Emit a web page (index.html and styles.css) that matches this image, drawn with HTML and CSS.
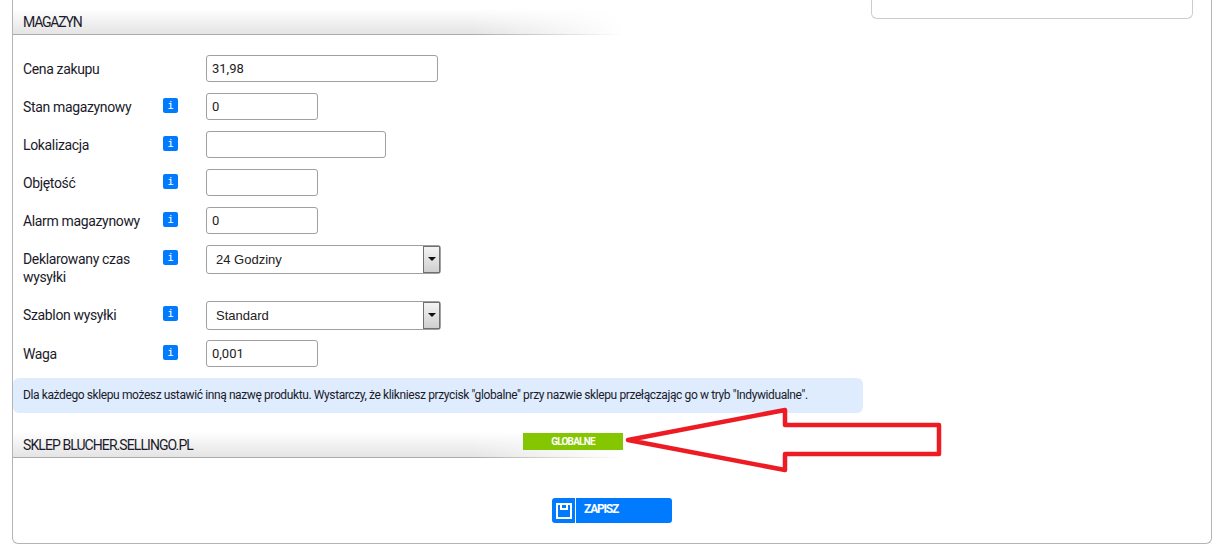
FILE: index.html
```html
<!DOCTYPE html>
<html>

<head>
  <title>Magazyn</title>
  <meta charset="UTF-8">
  <link rel="stylesheet" href="styles.css">
</head>

<body>
  <div class="panel">
    <div class="topArea">
      <div class="leftCol">
        <div class="sectionHead firstHead">MAGAZYN</div>

        <div class="formRow">
          <label class="rowLabel">Cena zakupu</label>
          <span class="infoSlot"></span>
          <input class="field wide" type="text" value="31,98">
        </div>
        <div class="formRow">
          <label class="rowLabel">Stan magazynowy</label>
          <span class="infoSlot"><span class="infoIcon">i</span></span>
          <input class="field small" type="text" value="0">
        </div>
        <div class="formRow">
          <label class="rowLabel">Lokalizacja</label>
          <span class="infoSlot"><span class="infoIcon">i</span></span>
          <input class="field medium" type="text">
        </div>
        <div class="formRow">
          <label class="rowLabel">Objętość</label>
          <span class="infoSlot"><span class="infoIcon">i</span></span>
          <input class="field small" type="text">
        </div>
        <div class="formRow">
          <label class="rowLabel">Alarm magazynowy</label>
          <span class="infoSlot"><span class="infoIcon">i</span></span>
          <input class="field small" type="text" value="0">
        </div>
        <div class="formRow selectRow twoLines">
          <label class="rowLabel">Deklarowany czas wysyłki</label>
          <span class="infoSlot"><span class="infoIcon">i</span></span>
          <div class="selectWrap">
            <select class="selectField">
              <option>24 Godziny</option>
            </select>
            <span class="selectArrow"></span>
          </div>
        </div>
        <div class="formRow selectRow">
          <label class="rowLabel">Szablon wysyłki</label>
          <span class="infoSlot"><span class="infoIcon">i</span></span>
          <div class="selectWrap">
            <select class="selectField">
              <option>Standard</option>
            </select>
            <span class="selectArrow"></span>
          </div>
        </div>
        <div class="formRow">
          <label class="rowLabel">Waga</label>
          <span class="infoSlot"><span class="infoIcon">i</span></span>
          <input class="field small" type="text" value="0,001">
        </div>

        <div class="notice">Dla każdego sklepu możesz ustawić inną nazwę produktu. Wystarczy, że klikniesz przycisk "globalne" przy nazwie sklepu przełączając go w tryb "Indywidualne".</div>

        <div class="sectionHead shopHead">
          <span class="shopName">SKLEP BLUCHER.SELLINGO.PL</span>
          <span class="globalBadge">GLOBALNE</span>
        </div>
      </div>
      <div class="sideCard"></div>
    </div>

    <div class="saveBar">
      <button class="saveBtn">
        <span class="saveIcon">
          <svg width="16" height="16" viewBox="0 0 16 16">
            <path d="M1 1H15V15H1Z M5 1V6H11V1" fill="none" stroke="#fff" stroke-width="2"/>
          </svg>
        </span>
        <span class="saveText">ZAPISZ</span>
      </button>
    </div>

    <!-- red arrow drawn on top of the screenshot -->
    <svg class="redArrow" width="325" height="75" viewBox="0 0 325 75">
      <path d="M9 37L166 7V22H320V51H166V67Z" fill="none" stroke="#ed1c24" stroke-width="4.5" stroke-linejoin="round"/>
    </svg>
  </div>
</body>

</html>
```

FILE: styles.css
```css
body {
  margin: 0;
  background-color: #ffffff;
  font-family: "Roboto", "Liberation Sans", sans-serif;
  color: #1a1a2a;
}
.panel {
  position: relative;
  box-sizing: border-box;
  width: 1200px;
  height: 544px;
  margin-left: 12px;
  border: 1px solid #b4b4b4;
  border-top: none;
  border-radius: 0 0 6px 6px;
}
.topArea {
  display: flex;
  height: 470px;
}
.leftCol {
  width: 850px;
}
.sideCard {
  box-sizing: border-box;
  width: 322px;
  height: 19px;
  margin-left: 8px;
  border: 1px solid #cccccc;
  border-top: none;
  border-radius: 0 0 6px 6px;
}
.sectionHead {
  box-sizing: border-box;
  width: 610px;
  padding-left: 10px;
  border-bottom: 1px solid;
  border-image: linear-gradient(to right, #aaaaaa 75%, transparent) 1;
  background: linear-gradient(to right, transparent 75%, #ffffff 100%), linear-gradient(#ffffff, #e4e4e4);
  font-size: 14px;
}
.firstHead {
  height: 26px;
  margin: 9px 0 20px;
  padding-top: 5px;
  letter-spacing: -1.2px;
}
.formRow {
  display: flex;
  align-items: flex-start;
  margin-bottom: 11px;
}
.rowLabel {
  box-sizing: border-box;
  width: 150px;
  padding: 5px 0 0 10px;
  font-size: 14px;
  line-height: 18px;
  letter-spacing: -0.35px;
}
.infoSlot {
  width: 43px;
  padding-top: 5px;
}
.infoIcon {
  display: block;
  width: 15px;
  height: 15px;
  background-color: #007bff;
  border-radius: 2px;
  color: #ffffff;
  font-family: "DejaVu Sans Mono", monospace;
  font-size: 11px;
  line-height: 15px;
  text-align: center;
}
.field {
  box-sizing: border-box;
  height: 27px;
  padding: 0 5px;
  border: 1px solid #a0a0a0;
  border-radius: 3px;
  font-family: "Roboto", sans-serif;
  font-size: 13px;
  color: #222222;
}
.wide {
  width: 232px;
}
.medium {
  width: 180px;
}
.small {
  width: 112px;
}
.selectRow {
  margin-bottom: 10px;
}
.twoLines {
  height: 46px;
  margin-bottom: 10px;
}
.selectWrap {
  position: relative;
  width: 235px;
  height: 29px;
}
.selectField {
  appearance: none;
  box-sizing: border-box;
  width: 100%;
  height: 29px;
  padding: 0 9px;
  border: 1px solid #a0a0a0;
  border-radius: 3px;
  background-color: #ffffff;
  font-family: "Liberation Sans", sans-serif;
  font-size: 13px;
  color: #222222;
}
.selectArrow {
  position: absolute;
  top: 1px;
  right: 1px;
  box-sizing: border-box;
  width: 17px;
  height: 27px;
  border: 1px solid #707070;
  background: linear-gradient(#f4f4f4, #cfcfcf);
}
.selectArrow::after {
  content: "";
  position: absolute;
  top: 10px;
  left: 4px;
  border-top: 4px solid #111111;
  border-left: 4px solid transparent;
  border-right: 4px solid transparent;
}
.notice {
  box-sizing: border-box;
  height: 35px;
  margin-top: 11px;
  padding-left: 10px;
  border-radius: 6px;
  background-color: #deecfd;
  font-size: 12px;
  line-height: 35px;
  letter-spacing: -0.39px;
  white-space: nowrap;
}
.shopHead {
  display: flex;
  justify-content: space-between;
  height: 26px;
  margin-top: 19px;
  padding-top: 1px;
}
.shopName {
  padding-top: 4px;
  font-size: 14px;
  letter-spacing: -0.92px;
}
.globalBadge {
  width: 100px;
  height: 17px;
  background-color: #84c600;
  color: #ffffff;
  font-size: 10px;
  font-weight: bold;
  line-height: 17px;
  letter-spacing: -0.8px;
  text-align: center;
}
.saveBar {
  display: flex;
  justify-content: center;
  padding-top: 28px;
}
.saveBtn {
  display: flex;
  width: 120px;
  height: 25px;
  padding: 0;
  border: none;
  border-radius: 3px;
  background-color: #007bff;
  color: #ffffff;
  font-family: inherit;
}
.saveIcon {
  display: flex;
  align-items: center;
  justify-content: center;
  box-sizing: border-box;
  width: 24px;
  height: 25px;
  border-right: 1px solid #ffffff;
}
.saveText {
  padding-left: 8px;
  font-size: 12px;
  font-weight: bold;
  line-height: 22px;
  letter-spacing: -1.2px;
}
.redArrow {
  position: absolute;
  top: 403px;
  left: 606px;
}
```
